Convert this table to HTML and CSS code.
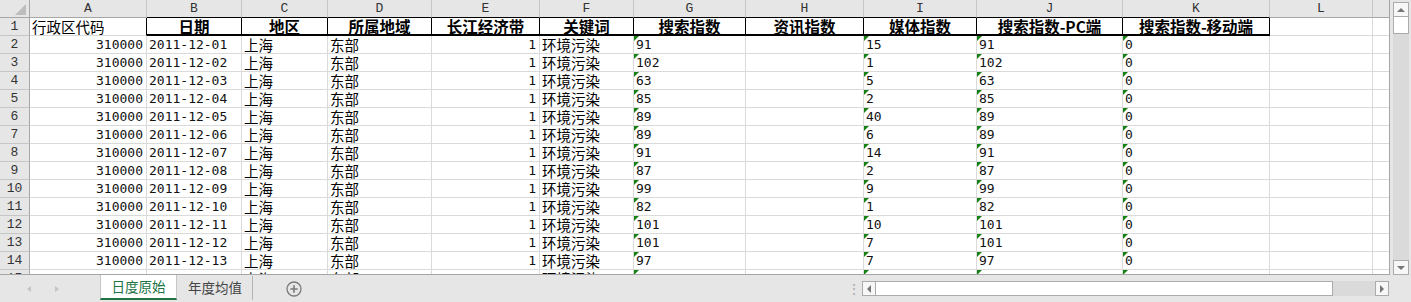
FILE: index.html
```html
<!DOCTYPE html>
<html lang="zh-CN">
<head>
<meta charset="utf-8">
<title>工作表</title>
<link rel="stylesheet" href="styles.css">
</head>
<body>
<div class="app">
  <div class="top">
    <div class="sheet">
      <div class="col corner"></div>
      <div class="col">A</div><div class="col hb">B</div><div class="col hb">C</div><div class="col hb">D</div><div class="col hb">E</div><div class="col hb">F</div><div class="col hb">G</div><div class="col hb">H</div><div class="col hb">I</div><div class="col hb">J</div><div class="col hb">K</div><div class="col">L</div><div class="col e"></div>

      <div class="rh">1</div>
      <div class="c z a1">行政区代码</div><div class="h">日期</div><div class="h">地区</div><div class="h">所属地域</div><div class="h">长江经济带</div><div class="h">关键词</div><div class="h">搜索指数</div><div class="h">资讯指数</div><div class="h">媒体指数</div><div class="h">搜索指数-PC端</div><div class="h">搜索指数-移动端</div><div class="c"></div><div class="c e"></div>

      <div class="rh">2</div><div class="c r">310000</div><div class="c">2011-12-01</div><div class="c z">上海</div><div class="c z">东部</div><div class="c r">1</div><div class="c z">环境污染</div><div class="c t">91</div><div class="c"></div><div class="c t">15</div><div class="c t">91</div><div class="c t">0</div><div class="c"></div><div class="c e"></div>
      <div class="rh">3</div><div class="c r">310000</div><div class="c">2011-12-02</div><div class="c z">上海</div><div class="c z">东部</div><div class="c r">1</div><div class="c z">环境污染</div><div class="c t">102</div><div class="c"></div><div class="c t">1</div><div class="c t">102</div><div class="c t">0</div><div class="c"></div><div class="c e"></div>
      <div class="rh">4</div><div class="c r">310000</div><div class="c">2011-12-03</div><div class="c z">上海</div><div class="c z">东部</div><div class="c r">1</div><div class="c z">环境污染</div><div class="c t">63</div><div class="c"></div><div class="c t">5</div><div class="c t">63</div><div class="c t">0</div><div class="c"></div><div class="c e"></div>
      <div class="rh">5</div><div class="c r">310000</div><div class="c">2011-12-04</div><div class="c z">上海</div><div class="c z">东部</div><div class="c r">1</div><div class="c z">环境污染</div><div class="c t">85</div><div class="c"></div><div class="c t">2</div><div class="c t">85</div><div class="c t">0</div><div class="c"></div><div class="c e"></div>
      <div class="rh">6</div><div class="c r">310000</div><div class="c">2011-12-05</div><div class="c z">上海</div><div class="c z">东部</div><div class="c r">1</div><div class="c z">环境污染</div><div class="c t">89</div><div class="c"></div><div class="c t">40</div><div class="c t">89</div><div class="c t">0</div><div class="c"></div><div class="c e"></div>
      <div class="rh">7</div><div class="c r">310000</div><div class="c">2011-12-06</div><div class="c z">上海</div><div class="c z">东部</div><div class="c r">1</div><div class="c z">环境污染</div><div class="c t">89</div><div class="c"></div><div class="c t">6</div><div class="c t">89</div><div class="c t">0</div><div class="c"></div><div class="c e"></div>
      <div class="rh">8</div><div class="c r">310000</div><div class="c">2011-12-07</div><div class="c z">上海</div><div class="c z">东部</div><div class="c r">1</div><div class="c z">环境污染</div><div class="c t">91</div><div class="c"></div><div class="c t">14</div><div class="c t">91</div><div class="c t">0</div><div class="c"></div><div class="c e"></div>
      <div class="rh">9</div><div class="c r">310000</div><div class="c">2011-12-08</div><div class="c z">上海</div><div class="c z">东部</div><div class="c r">1</div><div class="c z">环境污染</div><div class="c t">87</div><div class="c"></div><div class="c t">2</div><div class="c t">87</div><div class="c t">0</div><div class="c"></div><div class="c e"></div>
      <div class="rh">10</div><div class="c r">310000</div><div class="c">2011-12-09</div><div class="c z">上海</div><div class="c z">东部</div><div class="c r">1</div><div class="c z">环境污染</div><div class="c t">99</div><div class="c"></div><div class="c t">9</div><div class="c t">99</div><div class="c t">0</div><div class="c"></div><div class="c e"></div>
      <div class="rh">11</div><div class="c r">310000</div><div class="c">2011-12-10</div><div class="c z">上海</div><div class="c z">东部</div><div class="c r">1</div><div class="c z">环境污染</div><div class="c t">82</div><div class="c"></div><div class="c t">1</div><div class="c t">82</div><div class="c t">0</div><div class="c"></div><div class="c e"></div>
      <div class="rh">12</div><div class="c r">310000</div><div class="c">2011-12-11</div><div class="c z">上海</div><div class="c z">东部</div><div class="c r">1</div><div class="c z">环境污染</div><div class="c t">101</div><div class="c"></div><div class="c t">10</div><div class="c t">101</div><div class="c t">0</div><div class="c"></div><div class="c e"></div>
      <div class="rh">13</div><div class="c r">310000</div><div class="c">2011-12-12</div><div class="c z">上海</div><div class="c z">东部</div><div class="c r">1</div><div class="c z">环境污染</div><div class="c t">101</div><div class="c"></div><div class="c t">7</div><div class="c t">101</div><div class="c t">0</div><div class="c"></div><div class="c e"></div>
      <div class="rh">14</div><div class="c r">310000</div><div class="c">2011-12-13</div><div class="c z">上海</div><div class="c z">东部</div><div class="c r">1</div><div class="c z">环境污染</div><div class="c t">97</div><div class="c"></div><div class="c t">7</div><div class="c t">97</div><div class="c t">0</div><div class="c"></div><div class="c e"></div>
      <div class="rh">15</div><div class="c r">310000</div><div class="c">2011-12-14</div><div class="c z">上海</div><div class="c z">东部</div><div class="c r">1</div><div class="c z">环境污染</div><div class="c t">95</div><div class="c"></div><div class="c t">3</div><div class="c t">95</div><div class="c t">0</div><div class="c"></div><div class="c e"></div>
    </div>
    <div class="vscroll">
      <div class="sbtn"><span class="tri up"></span></div>
      <div class="vthumb"></div>
      <div class="vtrack"></div>
      <div class="sbtn"><span class="tri down"></span></div>
    </div>
  </div>
  <div class="bottom">
    <div class="nav"><span class="tri navl"></span><span class="tri navr"></span></div>
    <div class="tab active">日度原始</div>
    <div class="tab">年度均值</div>
    <div class="addwrap"><span class="add">
      <svg width="16" height="16" viewBox="0 0 16 16"><circle cx="8" cy="8" r="7" fill="none" stroke="#7a7a7a" stroke-width="1.3"/><path d="M8 4.3v7.4M4.3 8h7.4" stroke="#7a7a7a" stroke-width="1.6"/></svg>
    </span></div>
    <div class="dots">⋮</div>
    <div class="hscroll">
      <div class="hbtn"><span class="tri left"></span></div>
      <div class="hthumb"></div>
      <div class="htrack"></div>
      <div class="hbtn"><span class="tri right"></span></div>
    </div>
  </div>
</div>
</body>
</html>
```
FILE: styles.css
```css
* { box-sizing: border-box; margin: 0; padding: 0; }
html, body { width: 1411px; height: 302px; overflow: hidden; }
body { background: #e6e6e6; font-family: "Noto Sans CJK SC", sans-serif; }

.app { display: flex; flex-direction: column; height: 302px; }
.top { display: flex; height: 275px; }

.sheet {
  width: 1390px; height: 275px; overflow: hidden; background: #fff;
  border-right: 1px solid #a6a6a6; border-bottom: 1px solid #a6a6a6;
  display: grid;
  grid-template-columns: 30px 117px 95px 86px 104px 108px 94px 112px 118px 113px 146px 147px 103px 16px;
  grid-auto-rows: 18px; align-content: start;
}

.col {
  background: #e6e6e6; border-right: 1px solid #c6c6c6; border-bottom: 1px solid #a6a6a6;
  font: 13px/17px "Liberation Mono", monospace; color: #333; text-align: center;
}
.col.e { border-right: none; }
.col.hb { border-bottom-color: #000; }
.corner { position: relative; border-right-color: #a6a6a6; }
.corner::after {
  content: ""; position: absolute; right: 3px; bottom: 2px; width: 0; height: 0;
  border-left: 11px solid transparent; border-bottom: 11px solid #bdbdbd;
}

.rh {
  background: #e6e6e6; border-right: 1px solid #a6a6a6; border-bottom: 1px solid #c6c6c6;
  font: 13px/17px "Liberation Mono", monospace; color: #333; text-align: center;
}

.c {
  position: relative; border-right: 1px solid #dadada; border-bottom: 1px solid #dadada;
  padding: 0 2px; font: 13px/18px "DejaVu Sans Mono", monospace; color: #111;
  white-space: nowrap;
}
.c.e { border-right: none; }
.r { text-align: right; padding-right: 3px; }
.z { font: 14.5px/17px "Noto Sans CJK SC", sans-serif; padding-left: 2px; color: #000; }
.a1 { border-right-color: #000; }
.t::before {
  content: ""; position: absolute; left: 0; top: 0; width: 0; height: 0;
  border-top: 5px solid #178017; border-right: 5px solid transparent;
}

.h {
  border-right: 1px solid #000; border-bottom: 2px solid #000;
  font: 700 15.5px/16px "Noto Sans CJK SC", sans-serif; color: #000;
  text-align: center; white-space: nowrap;
}

.vscroll { display: flex; flex-direction: column; width: 21px; padding: 2px 2px 0 3px; }
.sbtn {
  height: 15px; background: #f7f7f7; border: 1px solid #ababab;
  display: flex; align-items: center; justify-content: center;
}
.vthumb { height: 17px; background: #fff; border: 1px solid #ababab; border-top: none; }
.vtrack { flex: 1; background: #dadada; }

.tri { display: block; width: 0; height: 0; }
.tri.up { border-left: 4px solid transparent; border-right: 4px solid transparent; border-bottom: 4px solid #777; }
.tri.down { border-left: 4px solid transparent; border-right: 4px solid transparent; border-top: 4px solid #777; }
.tri.left { border-top: 4px solid transparent; border-bottom: 4px solid transparent; border-right: 4px solid #777; }
.tri.right { border-top: 4px solid transparent; border-bottom: 4px solid transparent; border-left: 4px solid #777; }

.bottom { display: flex; align-items: flex-start; height: 27px; }
.nav { width: 100px; height: 27px; display: flex; align-items: center; padding-left: 27px; gap: 24px; }
.tri.navl { border-top: 3px solid transparent; border-bottom: 3px solid transparent; border-right: 4px solid #c4c4c4; }
.tri.navr { border-top: 3px solid transparent; border-bottom: 3px solid transparent; border-left: 4px solid #c4c4c4; }

.tab {
  height: 24px; padding: 0 10px 0 11px; font-size: 13.5px; line-height: 22px; color: #444;
  border-right: 1px solid #b4b4b4; margin-top: 1px;
}
.tab.active {
  width: 77px; margin-top: 0; height: 25px; background: #fff; color: #217346;
  border-left: 1px solid #c6c6c6; border-right: 1px solid #c6c6c6; border-bottom: 2px solid #217346;
  text-align: center; padding: 0; line-height: 23px;
}
.addwrap { width: 52px; height: 27px; display: flex; align-items: center; padding-left: 33px; }
.add { display: block; width: 16px; height: 16px; }
.add svg { display: block; }

.dots { margin-left: auto; width: 15px; font-size: 14px; line-height: 27px; color: #aaa; }
.hscroll { display: flex; width: 527px; height: 15px; margin-top: 6px; margin-right: 22px; }
.hbtn {
  width: 14px; height: 15px; background: #f7f7f7; border: 1px solid #ababab;
  display: flex; align-items: center; justify-content: center;
}
.hthumb { width: 457px; background: #fff; border: 1px solid #ababab; border-left: none; }
.htrack { flex: 1; background: #dadada; }
```
